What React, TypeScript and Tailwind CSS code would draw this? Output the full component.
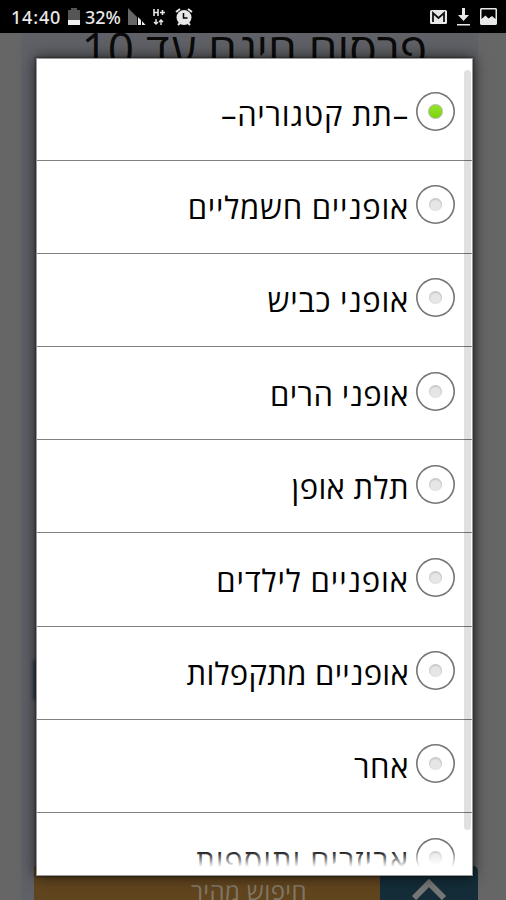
import React from "react";

type Option = { label: string; tracking: string; selected?: boolean };

const options: Option[] = [
  { label: "–תת קטגוריה–", tracking: "tracking-[0.75px]", selected: true },
  { label: "אופניים חשמליים", tracking: "tracking-[0.75px]" },
  { label: "אופני כביש", tracking: "tracking-[0.75px]" },
  { label: "אופני הרים", tracking: "tracking-[0.4px]" },
  { label: "תלת אופן", tracking: "tracking-[0.35px]" },
  { label: "אופניים לילדים", tracking: "tracking-[0.9px]" },
  { label: "אופניים מתקפלות", tracking: "tracking-[0.27px]" },
  { label: "אחר", tracking: "tracking-[0.6px]" },
  { label: "אביזרים ותוספות", tracking: "tracking-[0.9px]" },
];

function Radio({ selected }: { selected?: boolean }) {
  return (
    <span className="flex h-[39px] w-[39px] shrink-0 items-center justify-center rounded-full bg-white shadow-[inset_0_0_0_1.6px_#757575]">
      {selected ? (
        <span className="h-[15px] w-[15px] rounded-full border border-[#b5b5b5] bg-linear-to-b from-[#93e625] to-[#7ed30f]" />
      ) : (
        <span className="h-[13px] w-[13px] rounded-full bg-[#e6e6e6] shadow-[inset_0_1px_1px_1px_#cccccc]" />
      )}
    </span>
  );
}

function StatusBar() {
  return (
    <header dir="ltr" className="relative z-10 flex h-[33px] shrink-0 items-center justify-between bg-black pr-[9px] pl-[11px] text-[#e8e8e8]">
      <div className="flex items-center">
        <span className="w-[57px] pt-[2px] font-['Noto_Sans',sans-serif] text-[18px] leading-[33px] font-medium tracking-[0.8px]">14:40</span>
        <svg width="12" height="18" viewBox="0 0 12 18">
          <path d="M3 0h6v2h3v10H0V2h3z" fill="#555" />
          <path d="M0 12h12v5H0z" fill="#f0f0f0" />
        </svg>
        <span className="ml-[5px] w-[43px] pt-[2px] font-['Noto_Sans',sans-serif] text-[18px] leading-[33px] font-medium">32%</span>
        <svg width="18" height="18" viewBox="0 0 18 18">
          <path d="M0 0l9 9v8H0z" fill="#666" />
          <path d="M10 9l3 3v5h-3zM14 13l3.500 4H14z" fill="#eee" />
        </svg>
        <svg className="ml-[6px]" width="15" height="18" viewBox="0 0 15 18">
          <path d="M2 1v7M6 1v7M2 4.500h4M8 4.500h5M10.500 2v5" stroke="#e8e8e8" strokeWidth="1.600" fill="none" />
          <path d="M4 11v5M2 14l2 2 2-2M9 17v-5M7 14l2-2 2 2" stroke="#e8e8e8" strokeWidth="1.400" fill="none" />
        </svg>
        <svg className="ml-[8px]" width="18" height="18" viewBox="0 0 18 18">
          <circle cx="9" cy="9.500" r="7.500" fill="#e8e8e8" />
          <path d="M1 4l4-3M17 4l-4-3M3 17l2-2M15 17l-2-2" stroke="#e8e8e8" strokeWidth="2" />
          <path d="M8.500 5v5h4" stroke="#000" strokeWidth="1.500" fill="none" />
        </svg>
      </div>
      <div className="flex items-center">
        <svg className="mt-[2px]" width="17" height="15" viewBox="0 0 17 15">
          <rect width="17" height="14" rx="1.500" fill="#e8e8e8" />
          <path d="M3 12V3l5.500 5L14 3v9" stroke="#111" strokeWidth="1.800" fill="none" />
        </svg>
        <svg className="ml-[10px]" width="13" height="18" viewBox="0 0 13 18">
          <path d="M5 0h3v7h4l-5.500 6L1 7h4zM0 16h13v1.500H0z" fill="#e8e8e8" />
        </svg>
        <svg className="ml-[10px]" width="17" height="17" viewBox="0 0 17 17">
          <path fillRule="evenodd" d="M1 0h15l1 1v15l-1 1H1l-1-1V1zM1.500 1.500v9.500l4-3.500 3 3 3.500-2.500 3.500 3v-9.500z" fill="#e8e8e8" />
        </svg>
      </div>
    </header>
  );
}

export default function App() {
  return (
    <div dir="rtl" className="relative flex h-[900px] w-[506px] flex-col overflow-hidden bg-[#666]">
      <StatusBar />
      <main className="mr-[28px] ml-[21px] flex flex-1 flex-col justify-between bg-[#606166]">
        <h1 className="-mt-[15px] pr-[51px] font-['Open_Sans',sans-serif] text-[46px] leading-[60px] whitespace-nowrap text-[#0b0b0b]">
          פרסום חינם עד 10
        </h1>
        <div dir="ltr" className="ml-[13px] flex h-[34px]">
          <div className="h-full w-[346px] bg-[#61451f] pt-[9px] pr-[73px] text-right font-['Open_Sans',sans-serif] text-[24px] leading-[32px] tracking-[0.4px] text-[#827866]" dir="rtl">
            חיפוש מהיר
          </div>
          <div className="flex h-full w-[98px] justify-center rounded-tr-[5px] bg-[#142d39] pt-[13px]">
            <svg width="36" height="24" viewBox="0 0 36 24">
              <path d="M3 19L18 4l15 15" stroke="#777" strokeWidth="6" fill="none" />
            </svg>
          </div>
        </div>
      </main>

      {/* edge of the search field behind the dialog */}
      <div className="absolute top-[660px] left-[33px] h-[40px] w-[4px] bg-[#2f3e4a] blur-[1.5px]" />

      <div role="dialog" className="absolute top-[58px] left-[36px] z-20 h-[818px] w-[437px] border border-[#999] bg-white shadow-[0_0_2px_1px_rgba(0,0,0,0.35),0_0_14px_1px_rgba(0,0,0,0.6)]">
        <div className="h-[808px] overflow-hidden pt-[8.500px]">
          {options.map((option) => (
            <label key={option.label} className="flex h-[93.200px] items-center border-b border-[#808080] pr-[17px] pb-[4px]">
              <Radio selected={option.selected} />
              <span className={`mr-[7px] pt-[5px] font-['Open_Sans',sans-serif] text-[31px] leading-[40px] whitespace-nowrap text-black ${option.tracking}`}>
                {option.label}
              </span>
            </label>
          ))}
        </div>
        <div className="absolute right-0 bottom-[8px] left-0 h-[17px] bg-linear-to-b from-white/0 to-white" />
        <div className="absolute top-[11px] right-[1px] h-[760px] w-[7px] rounded-full bg-black/12" />
      </div>
    </div>
  );
}
